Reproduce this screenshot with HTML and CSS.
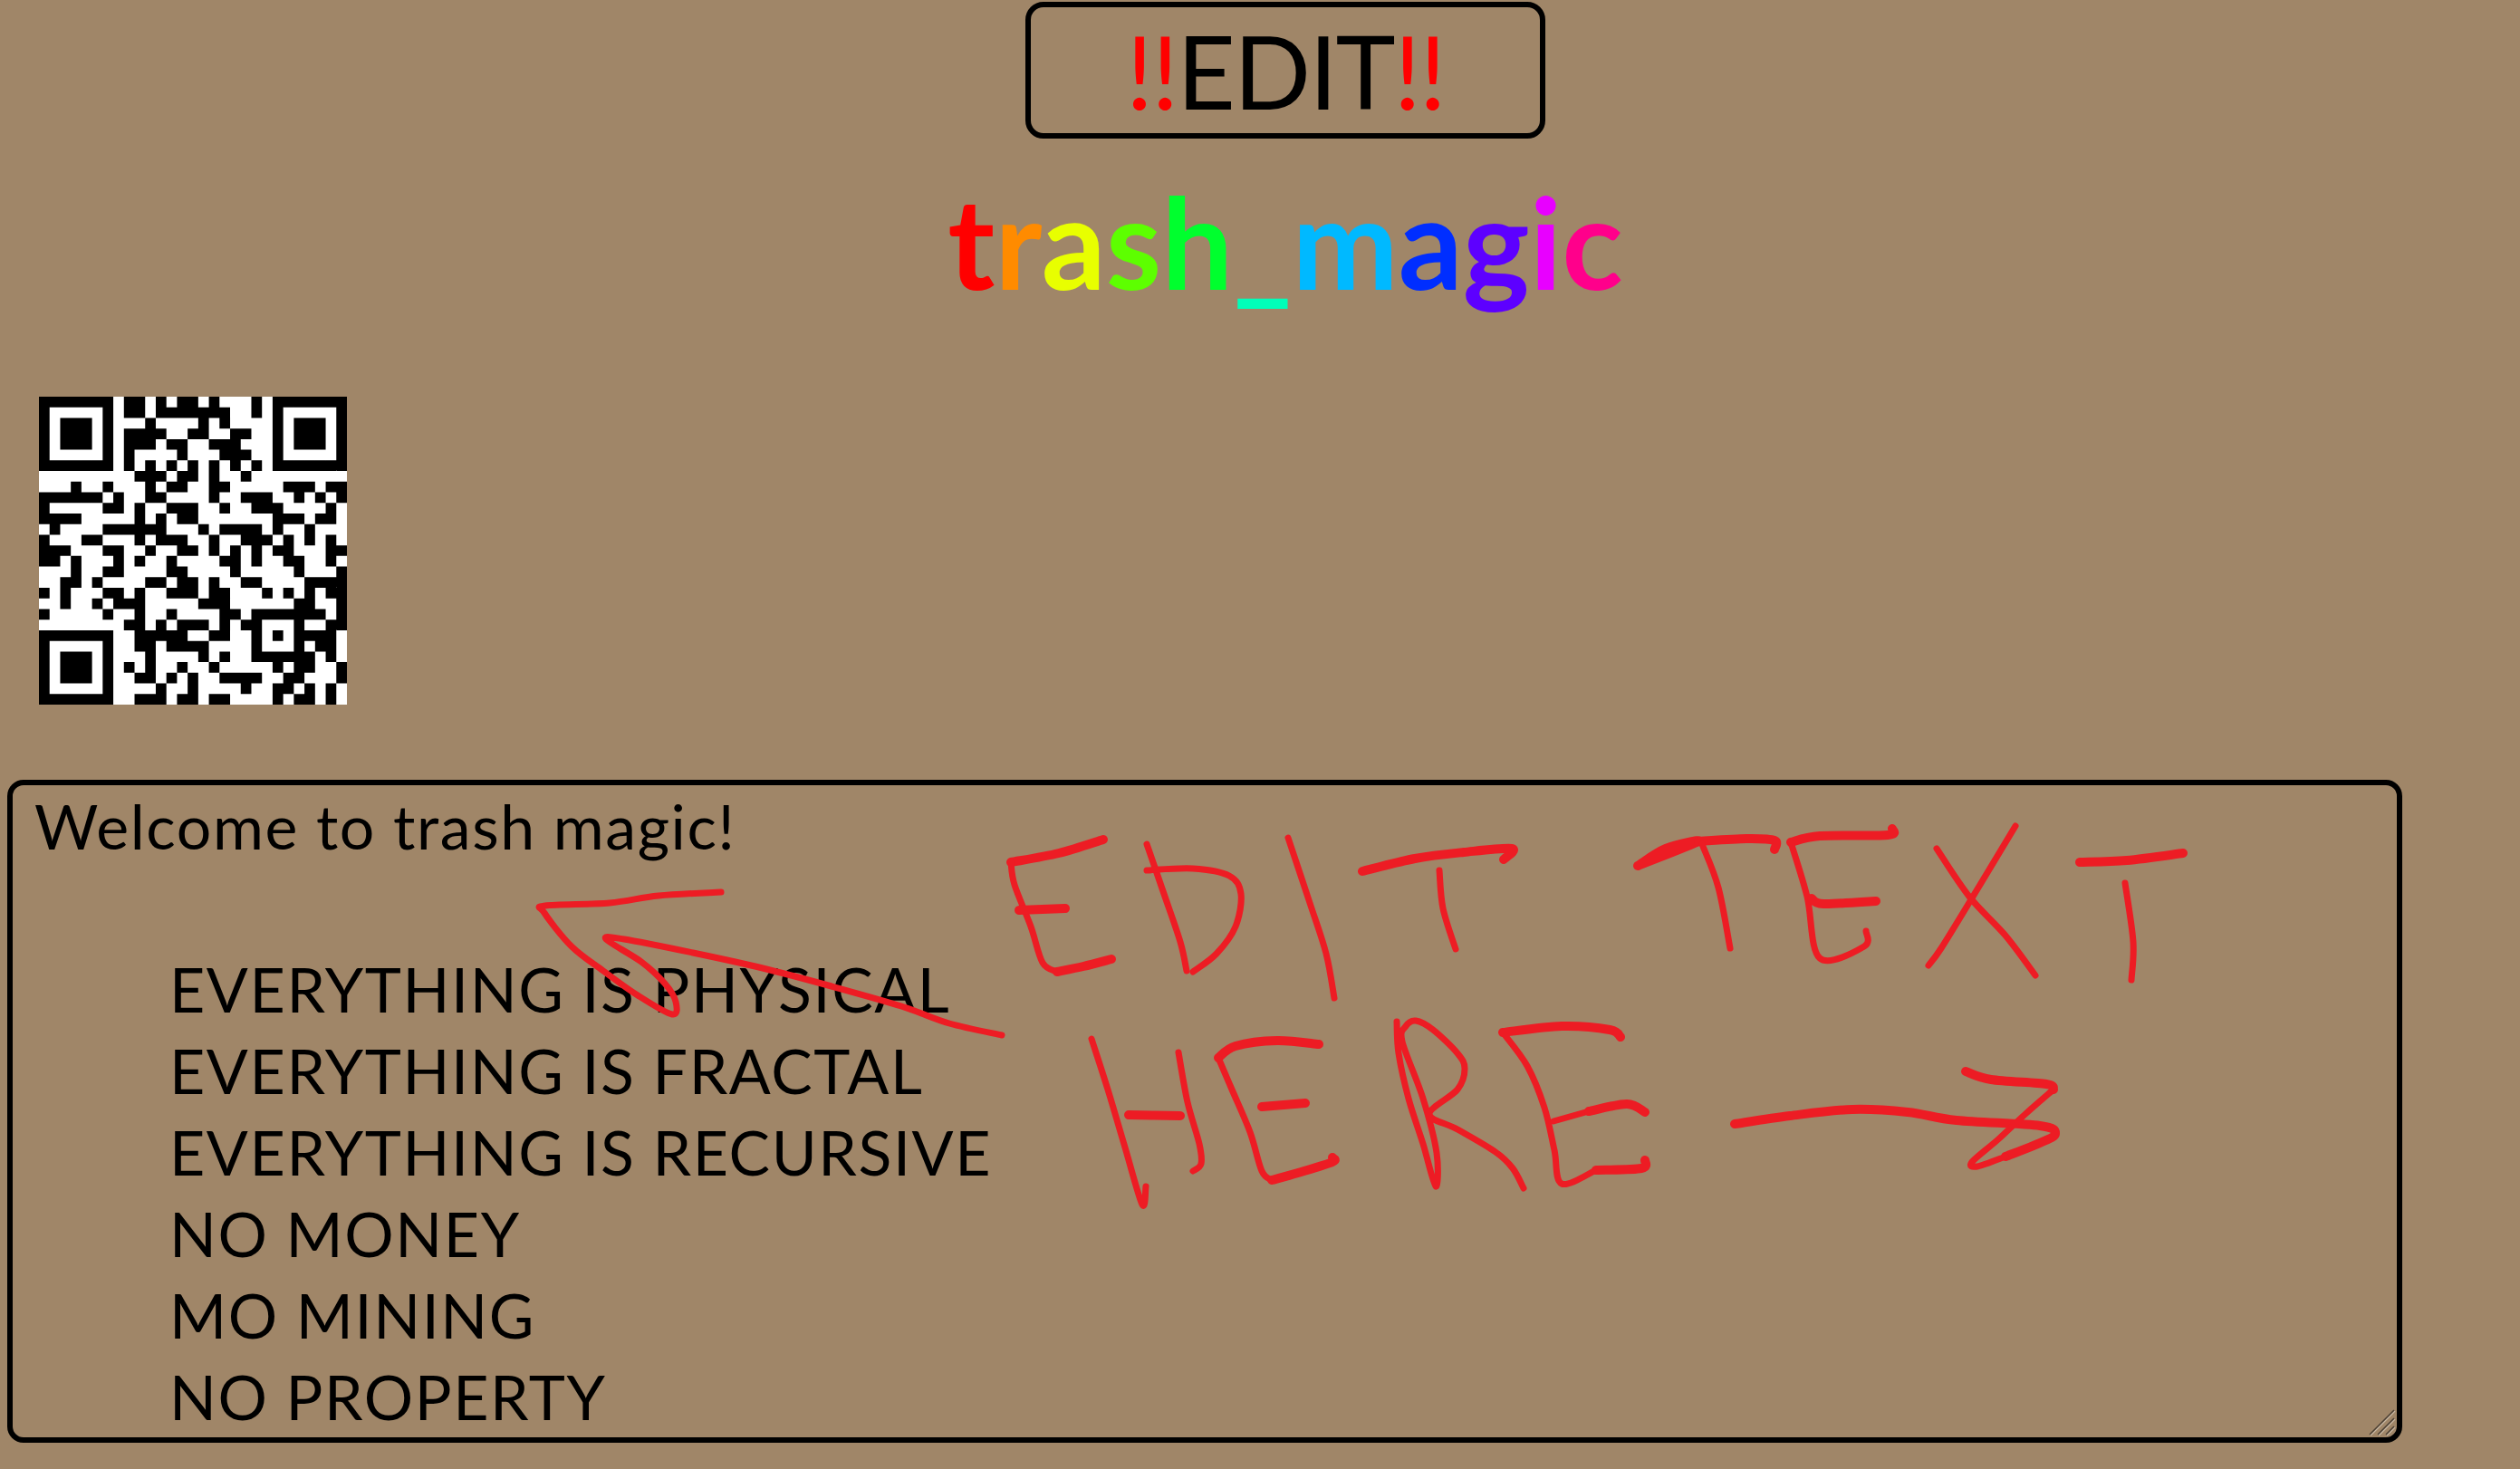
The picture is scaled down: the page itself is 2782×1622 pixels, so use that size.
FILE: index.html
```html
<!DOCTYPE html>
<html lang="en">
<head>
  <meta charset="UTF-8" />
  <title>trash_magic</title>
  <link rel="stylesheet" href="styles.css">
</head>
<body>

  <header class="top">
    <button class="edit-btn"><span class="red">!!</span>EDIT<span class="red">!!</span></button>

    <h1 class="title">
      <span class="c0">t</span><span class="c1">r</span><span class="c2">a</span><span class="c3">s</span><span class="c4">h</span><span class="c5">_</span><span class="c6">m</span><span class="c7">a</span><span class="c8">g</span><span class="c9">i</span><span class="c10">c</span>
    </h1>
  </header>

  <svg class="qr" id="qr" viewBox="0 0 29 29"><path id="qrPath" d=""/></svg>

  <textarea class="editor" spellcheck="false">Welcome to trash magic!

	EVERYTHING IS PHYSICAL
	EVERYTHING IS FRACTAL
	EVERYTHING IS RECURSIVE
	NO MONEY
	MO MINING
	NO PROPERTY</textarea>

  <!-- resize grip in the corner of the text box -->
  <svg class="grip" viewBox="0 0 30 30">
    <path class="grip-light" d="M2 29 L29 2 M11 29 L29 11 M20 29 L29 20"/>
    <path class="grip-dark" d="M1 28 L28 1 M10 28 L28 10 M19 28 L28 19"/>
  </svg>

  <!-- red marker scribbles on top of the text box -->
  <svg class="scribble" viewBox="0 0 2782 1622">
    <!-- arrow to the text -->
    <path class="pen" d="M796 985 L727 989 L673 997 L602 1000 L601 1008 L631 1045 L666 1072 L704 1099 L742 1120 L746 1106 L734 1086 L708 1062 L669 1037 L689 1037 L765 1052 L842 1069 L918 1089 L995 1111 L1048 1130 L1106 1143"/>
    <!-- EDIT -->
    <path class="pen-thick" d="M1218 927 L1169 942 L1116 952"/>
    <path class="pen" d="M1116 952 L1120 977 L1138 1023 L1151 1063 L1167 1073"/>
    <path class="pen-thick" d="M1167 1073 L1196 1067 L1227 1059"/>
    <path class="pen-thick" d="M1125 1005 L1176 1003"/>
    <path class="pen" d="M1266 932 L1285 987 L1303 1040 L1310 1072"/>
    <path class="pen" d="M1266 961 L1317 959 L1357 967 L1370 987 L1364 1023 L1343 1053 L1317 1073"/>
    <path class="pen" d="M1422 925 L1446 997 L1464 1053 L1473 1102"/>
    <path class="pen-thick" d="M1504 962 L1562 948 L1616 941 L1669 937 L1660 949"/>
    <path class="pen" d="M1589 961 L1593 1003 L1607 1048"/>
    <!-- TEXT -->
    <path class="pen-thick" d="M1808 956 L1839 937 L1875 929 L1808 956"/>
    <path class="pen-thick" d="M1875 929 L1928 926 L1959 928 L1959 938"/>
    <path class="pen" d="M1879 932 L1897 980 L1910 1047"/>
    <path class="pen-thick" d="M2089 915 L2084 922 L2009 923 L1977 930"/>
    <path class="pen" d="M1977 930 L1995 990 L2009 1058 L2058 1045 L2060 1028"/>
    <path class="pen-thick" d="M2000 992 L2013 998 L2071 995"/>
    <path class="pen" d="M2138 937 L2174 990 L2214 1033 L2247 1077"/>
    <path class="pen" d="M2225 912 L2178 990 L2143 1047 L2129 1066"/>
    <path class="pen-thick" d="M2296 952 L2348 950 L2410 942"/>
    <path class="pen" d="M2346 975 L2355 1040 L2353 1082"/>
    <!-- HERE -->
    <path class="pen" d="M1205 1147 L1223 1203 L1242 1267 L1261 1330 L1265 1310"/>
    <path class="pen-thick" d="M1246 1231 L1303 1232"/>
    <path class="pen" d="M1301 1162 L1311 1217 L1324 1263 L1326 1285 L1317 1293"/>
    <path class="pen-thick" d="M1456 1153 L1410 1149 L1364 1155 L1345 1168"/>
    <path class="pen" d="M1345 1168 L1360 1203 L1380 1250 L1393 1293 L1404 1303"/>
    <path class="pen-thick" d="M1404 1303 L1433 1295 L1471 1283 L1471 1278"/>
    <path class="pen-thick" d="M1393 1222 L1441 1218"/>
    <path class="pen" d="M1542 1128 L1544 1163 L1555 1213 L1571 1263 L1585 1310 L1586 1273 L1571 1213 L1548 1150 L1552 1133 L1563 1127 L1582 1137 L1609 1163 L1617 1180 L1609 1203 L1578 1230 L1609 1247 L1651 1272 L1670 1290 L1682 1312"/>
    <path class="pen-thick" d="M1789 1145 L1777 1137 L1724 1133 L1659 1140"/>
    <path class="pen" d="M1659 1140 L1686 1177 L1705 1223 L1716 1270 L1724 1307 L1762 1292"/>
    <path class="pen-thick" d="M1762 1292 L1812 1290 L1816 1281"/>
    <path class="pen" d="M1715 1238 L1754 1227"/>
    <path class="pen-thick" d="M1754 1227 L1796 1219 L1816 1228"/>
    <!-- arrow to the box -->
    <path class="pen-thick" d="M1915 1241 L1976 1232 L2045 1225 L2106 1228 L2160 1237 L2252 1243 L2269 1252 L2252 1262 L2214 1277"/>
    <path class="pen" d="M2214 1277 L2183 1288 L2177 1283 L2206 1258 L2236 1230 L2267 1203"/>
    <path class="pen-thick" d="M2267 1203 L2259 1197 L2198 1192 L2170 1183"/>
  </svg>

  <script>
    const qrRows = [
      "11111110110101101000101111111",
      "10000010110111111100101000001",
      "10111010001000010100001011101",
      "10111010111100110011001011101",
      "10111010111011001110001011101",
      "10000010100001000111001000001",
      "11111110101010101010101111111",
      "00000000011101101001000000000",
      "00010010001011001100000111011",
      "11111101001100001001110010101",
      "10000011010011100100111000010",
      "11110000010101100000001110110",
      "01000011111100010111101001000",
      "10001100010111001001110101010",
      "11100011001001101010101100011",
      "11010001010010000110100110010",
      "00010011000011000010000010001",
      "00110100001101101001100001111",
      "10100011010011101100010101011",
      "00100101110000011100000011001",
      "10000010010010000110111111101",
      "00000000110101110101100010011",
      "11111110011111001100101011110",
      "10000010011011110000100010110",
      "10111010001000010100111111010",
      "10111010101001001000001011001",
      "10111010011010100111100110001",
      "10000010000100100001001101010",
      "11111110011101101100001011010"
    ];

    // one 1x1 square per dark module
    let d = "";
    qrRows.forEach((row, y) => {
      [...row].forEach((bit, x) => {
        if (bit === "1") d += `M${x} ${y}h1v1h-1z`;
      });
    });
    document.getElementById('qrPath').setAttribute('d', d);

    // turn the scribble polylines into curves so they look hand drawn
    document.querySelectorAll('.scribble path').forEach(path => {
      const nums = path.getAttribute('d').match(/\d+/g).map(Number);
      const pts = [];
      for (let i = 0; i < nums.length; i += 2) pts.push([nums[i], nums[i + 1]]);

      let curve = `M${pts[0][0]} ${pts[0][1]}`;
      for (let i = 0; i < pts.length - 1; i++) {
        const p0 = pts[i - 1] || pts[i];
        const p1 = pts[i];
        const p2 = pts[i + 1];
        const p3 = pts[i + 2] || p2;
        const c1x = p1[0] + (p2[0] - p0[0]) / 6;
        const c1y = p1[1] + (p2[1] - p0[1]) / 6;
        const c2x = p2[0] - (p3[0] - p1[0]) / 6;
        const c2y = p2[1] - (p3[1] - p1[1]) / 6;
        curve += `C${c1x} ${c1y} ${c2x} ${c2y} ${p2[0]} ${p2[1]}`;
      }
      path.setAttribute('d', curve);
    });
  </script>

</body>
</html>
```

FILE: styles.css
```css
body {
  font-family: "Lato", sans-serif;
  background-color: #a08668;
  margin: 0;
  padding-top: 2px;
  height: 1620px;
  overflow: hidden;
  position: relative;
}

/* the top block is centred on a page slightly wider than the window */
.top {
  width: 2838px;
}

.edit-btn {
  display: block;
  width: 574px;
  height: 151px;
  margin: 0 auto;
  padding: 0;
  font-family: inherit;
  font-size: 112px;
  letter-spacing: -2px;
  line-height: 1;
  color: #000;
  background: transparent;
  border: 6px solid #000;
  border-radius: 20px;
}

.red {
  color: #f00;
}

.title {
  margin: 39px 0 0;
  font-size: 140px;
  font-weight: 700;
  line-height: 148px;
  text-align: center;
}

.c0 { color: #ff0000; }
.c1 { color: #ff8b00; }
.c2 { color: #e8ff00; }
.c3 { color: #5dff00; }
.c4 { color: #00ff2e; }
.c5 { color: #00ffb9; }
.c6 { color: #00b9ff; }
.c7 { color: #002eff; }
.c8 { color: #5d00ff; }
.c9 { color: #e800ff; }
.c10 { color: #ff008b; }

.qr {
  display: block;
  width: 340px;
  height: 340px;
  margin: 98px 0 0 43px;
  background-color: #fff;
}

.editor {
  display: block;
  box-sizing: border-box;
  width: 2644px;
  height: 732px;
  margin: 83px 0 0 8px;
  padding: 0 24px;
  font-family: inherit;
  font-size: 68px;
  letter-spacing: 1.6px;
  line-height: 90px;
  tab-size: 149px;
  color: #000;
  background: transparent;
  border: 6px solid #000;
  border-radius: 18px;
  overflow: hidden;
  resize: none;
}

.grip {
  position: absolute;
  top: 1556px;
  left: 2615px;
  width: 30px;
  height: 30px;
}

.grip-light,
.grip-dark {
  fill: none;
  stroke-width: 1.5;
}

.grip-light {
  stroke: #c9b8a3;
}

.grip-dark {
  stroke: #4a3f33;
}

.scribble {
  position: absolute;
  top: 0;
  left: 0;
  width: 2782px;
  height: 1622px;
  pointer-events: none;
}

.pen,
.pen-thick {
  fill: none;
  stroke: #ed1c24;
  stroke-linecap: round;
  stroke-linejoin: round;
  stroke-width: 7;
}

.pen-thick {
  stroke-width: 10;
}
```
